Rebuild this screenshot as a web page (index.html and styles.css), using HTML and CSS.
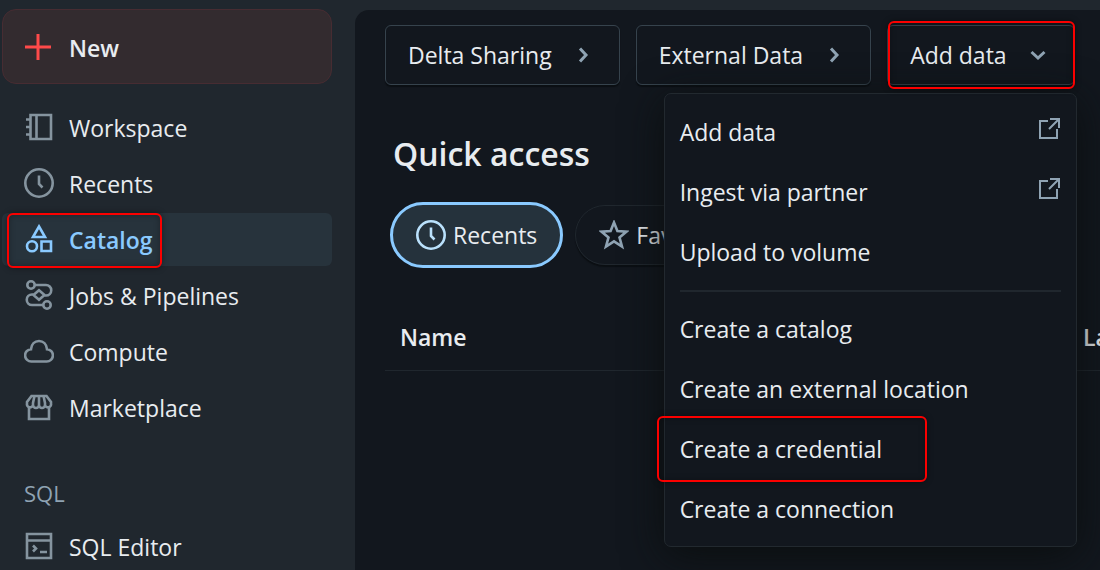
FILE: index.html
```
<!DOCTYPE html>
<html lang="en">
<head>
<meta charset="utf-8">
<title>Catalog</title>
<link rel="stylesheet" href="styles.css">
</head>
<body>
<div class="app">
  <nav class="sidebar" aria-label="Main">
    <button class="new-button" type="button">
      <svg class="icon" viewBox="0 0 30 30"><path d="M14 1v26M1 14h26" stroke-width="3"/></svg>
      <span>New</span>
    </button>
    <a class="nav-item" href="#workspace">
      <svg class="icon" viewBox="0 0 30 30"><path d="M6.500 3H27v24H6.500zM12.500 3v24M2 7.500h5M2 15h5M2 22.500h5"/></svg>
      <span>Workspace</span>
    </a>
    <a class="nav-item" href="#recents">
      <svg class="icon" viewBox="0 0 30 30"><circle cx="15" cy="15" r="13.700"/><path d="M15 7.500V16l3.500 3.500"/></svg>
      <span>Recents</span>
    </a>
    <a class="nav-item nav-item-active" href="#catalog" aria-current="page">
      <svg class="icon" viewBox="0 0 30 30"><path d="M15 2.500L21 13H9zM17.500 17.500h9.500v9.500h-9.500z"/><circle cx="8" cy="22.200" r="5"/></svg>
      <span>Catalog</span>
      <i class="callout callout-nav"></i>
    </a>
    <a class="nav-item" href="#jobs">
      <svg class="icon" viewBox="0 0 30 30"><circle cx="7" cy="5" r="3.700"/><circle cx="23" cy="25" r="3.700"/><path d="M11 5h11a5 5 0 0 1 0 10.500h-2M19 25H8a5 5 0 0 1 0-10.500h2M15 10.200l5.500 4.800-5.500 4.800-5.500-4.800z"/></svg>
      <span>Jobs &amp; Pipelines</span>
    </a>
    <a class="nav-item" href="#compute">
      <svg class="icon" viewBox="0 0 30 30"><path d="M7.500 25.500a6.100 6.100 0 0 1-.5-12.300C7.500 8 10.700 5 15 5s7.500 3 8 8.200a6.100 6.100 0 0 1-.5 12.300z"/></svg>
      <span>Compute</span>
    </a>
    <a class="nav-item" href="#marketplace">
      <svg class="icon" viewBox="0 0 30 30"><path d="M7.500 4h15L27 10v1.500a3 3 0 0 1-6 1.500 3 3 0 0 1-6 0 3 3 0 0 1-6 0 3 3 0 0 1-6-1.500V10zM5 15v12h20V15M10.500 4L9 11v2M15 4v9M19.500 4l1.500 7v2"/></svg>
      <span>Marketplace</span>
    </a>
    <h2 class="nav-heading">SQL</h2>
    <a class="nav-item" href="#sql-editor">
      <svg class="icon" viewBox="0 0 30 30"><path d="M3 3h24v24H3zM3 9.500h24M9 14.500l3 3-3 3M16 21h7"/></svg>
      <span>SQL Editor</span>
    </a>
  </nav>

  <main class="panel">
    <div class="toolbar">
      <button class="tool-button" type="button">
        <span>Delta Sharing</span>
        <svg class="chevron" viewBox="0 0 24 24"><path d="M9 5.500l6 6.500-6 6.500"/></svg>
      </button>
      <button class="tool-button" type="button">
        <span>External Data</span>
        <svg class="chevron" viewBox="0 0 24 24"><path d="M9 5.500l6 6.500-6 6.500"/></svg>
      </button>
      <div class="dropdown">
        <button class="tool-button" type="button" aria-expanded="true">
          <span>Add data</span>
          <svg class="chevron" viewBox="0 0 24 24"><path d="M5.500 9l6.500 6 6.500-6"/></svg>
        </button>
        <i class="callout callout-button"></i>
        <div class="menu" role="menu">
          <a class="menu-item" role="menuitem" href="#add">
            <span>Add data</span>
            <svg class="external" viewBox="0 0 24 24"><path d="M11 4H3v17h17v-9M13 2h9v9M21 3l-9 9"/></svg>
          </a>
          <a class="menu-item" role="menuitem" href="#partner">
            <span>Ingest via partner</span>
            <svg class="external" viewBox="0 0 24 24"><path d="M11 4H3v17h17v-9M13 2h9v9M21 3l-9 9"/></svg>
          </a>
          <button class="menu-item" role="menuitem" type="button">Upload to volume</button>
          <hr class="menu-divider">
          <button class="menu-item" role="menuitem" type="button">Create a catalog</button>
          <button class="menu-item" role="menuitem" type="button">Create an external location</button>
          <button class="menu-item" role="menuitem" type="button">Create a credential<i class="callout callout-menu"></i></button>
          <button class="menu-item" role="menuitem" type="button">Create a connection</button>
        </div>
      </div>
    </div>

    <h1 class="title">Quick access</h1>

    <div class="filters">
      <button class="pill pill-active" type="button" aria-pressed="true">
        <svg class="icon" viewBox="0 0 30 30"><circle cx="15" cy="15" r="13.700"/><path d="M15 7.500V16l3.500 3.500"/></svg>
        <span>Recents</span>
      </button>
      <button class="pill" type="button" aria-pressed="false">
        <svg class="icon" viewBox="0 0 30 30"><path d="M15 2.500l3.400 8.500 9.200.600-7.100 5.800 2.500 9.100-8-5.100-8 5.100 2.500-9.100-7.100-5.800 9.200-.600z"/></svg>
        <span>Favorites</span>
      </button>
    </div>

    <table class="assets">
      <thead>
        <tr><th class="col-name" scope="col">Name</th><th scope="col">Last viewed</th></tr>
      </thead>
    </table>
  </main>
</div>
</body>
</html>
```
FILE: styles.css
```
* { box-sizing: border-box; }

body {
  margin: 0;
  background: #20272e;
  color: #e8ecf0;
  font: 23px/30px "Open Sans", "Noto Sans", sans-serif;
  overflow: hidden;
}

button {
  font: inherit;
  color: inherit;
  background: none;
  border: 0;
  cursor: pointer;
}

a { color: inherit; text-decoration: none; }

svg {
  flex: none;
  fill: none;
  stroke: currentColor;
  stroke-width: 2.600;
}

.app { display: flex; min-height: 100vh; }

.sidebar {
  flex: none;
  width: 355px;
  padding: 9px 23px 0 2px;
  display: flex;
  flex-direction: column;
  gap: 3px;
}

.icon { width: 30px; height: 30px; }

.new-button {
  display: flex;
  align-items: center;
  gap: 15px;
  height: 75px;
  margin-bottom: 14px;
  padding: 3px 21px 0;
  background: #332b2f;
  border: 1px solid #472c32;
  border-radius: 14px;
  font-weight: 600;
}

.new-button .icon { color: #ff4a4a; }

.nav-item {
  position: relative;
  display: flex;
  align-items: center;
  gap: 15px;
  height: 53px;
  padding: 0 22px 1px;
  border-radius: 6px;
}

.nav-item span { padding-top: 2px; }

.nav-item .icon { color: #85949f; }

.nav-item-active {
  background: #27333c;
  color: #8acaff;
  font-weight: 600;
}

.nav-item-active .icon { color: #8acaff; }

.nav-heading {
  margin: 41px 22px 9px;
  font-size: 22px;
  line-height: 30px;
  font-weight: 400;
  color: #8fa3b3;
}

.panel {
  flex: 1;
  min-width: 0;
  margin-top: 10px;
  padding: 15px 0 0 30px;
  background: #12171e;
  border-radius: 14px 0 0 0;
  overflow: hidden;
}

.toolbar { display: flex; gap: 16px; }

.tool-button {
  display: flex;
  align-items: center;
  gap: 19px;
  height: 60px;
  padding: 0 24px 0 22px;
  border: 1px solid #36434d;
  border-radius: 6px;
  white-space: nowrap;
  box-shadow: 0 2px 1px #0b0f13;
}

.chevron {
  width: 24px;
  height: 24px;
  color: #8fa3b3;
  stroke-width: 3;
}

.dropdown { position: relative; }

.menu {
  position: absolute;
  z-index: 2;
  top: 68px;
  right: -2px;
  width: 413px;
  padding: 9px 0 6px;
  background: #12171e;
  border: 1px solid #22292f;
  border-radius: 7px;
  box-shadow: 0 8px 40px rgba(10, 13, 13, 0.9);
}

.menu-item {
  position: relative;
  display: flex;
  align-items: center;
  justify-content: space-between;
  width: 100%;
  height: 60px;
  padding: 0 15px 2px;
  white-space: nowrap;
}

.external {
  width: 24px;
  height: 24px;
  margin-bottom: 6px;
  color: #8fa3b3;
  stroke-width: 2;
}

.menu-divider {
  height: 2px;
  margin: 7px 15px 8px;
  border: 0;
  background: #20272e;
}

.callout {
  position: absolute;
  z-index: 3;
  border: 2px solid #fb0000;
  border-radius: 6px;
  box-shadow: 0 0 6px rgba(0, 0, 0, 0.4), inset 0 0 6px rgba(0, 0, 0, 0.3);
  pointer-events: none;
}

.callout-nav { inset: 0 170px -2px 5px; }
.callout-button { inset: -4px 0 -4px 1px; }
.callout-menu { inset: -4px 149px -2px -8px; }

.title {
  margin: 46px 0 25px 8px;
  font-size: 32px;
  line-height: 46px;
  font-weight: 600;
}

.filters {
  display: flex;
  align-items: center;
  gap: 12px;
  padding-left: 5px;
}

.pill {
  display: flex;
  align-items: center;
  gap: 7px;
  height: 60px;
  padding: 0 23px;
  border: 1px solid #20272e;
  border-radius: 33px;
  box-shadow: 0 2px 1px #0b0f13;
}

.pill .icon { color: #8fa3b3; }

.pill-active {
  height: 66px;
  background: #25323c;
  border: 3px solid #8acaff;
  box-shadow: none;
}

.pill-active .icon { color: #bae1fc; }

.assets {
  width: 100%;
  margin-top: 36px;
  border-collapse: collapse;
  table-layout: fixed;
}

.assets th {
  height: 66px;
  padding: 0 0 0 15px;
  border-bottom: 1px solid #20272e;
  font-weight: 600;
  text-align: left;
  white-space: nowrap;
}

.assets .col-name { width: 683px; }
```
